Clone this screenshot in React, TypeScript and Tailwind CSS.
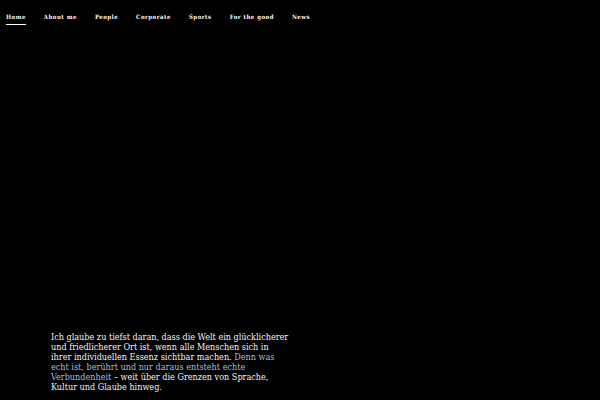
import React from 'react';

const NAV_ITEMS = [
  { label: 'Home', href: '#home' },
  { label: 'About me', href: '#about' },
  { label: 'People', href: '#people' },
  { label: 'Corporate', href: '#corporate' },
  { label: 'Sports', href: '#sports' },
  { label: 'For the good', href: '#good' },
  { label: 'News', href: '#news' },
];

const Header: React.FC = () => (
  <header className="px-[6px] pt-[12px]">
    <nav className="flex gap-[18px] text-[6px] leading-[9px] font-bold tracking-[0.5px]">
      {NAV_ITEMS.map((item, index) => (
        <a
          key={item.href}
          href={item.href}
          className={index === 0 ? 'border-b border-white pb-[3px]' : 'border-b border-transparent pb-[3px]'}
        >
          {item.label}
        </a>
      ))}
    </nav>
  </header>
);

const Statement: React.FC = () => (
  <section className="mt-auto px-[51px] pb-[8px]">
    <p className="max-w-[239px] text-[9px] leading-[10px] text-gray-100">
      Ich glaube zu tiefst daran, dass die Welt ein glücklicherer und friedlicherer Ort ist, wenn alle
      Menschen sich in ihrer individuellen Essenz sichtbar machen.{' '}
      <span className="text-[#a4bfd9]">
        Denn was echt ist, berührt und nur daraus entsteht echte Verbundenheit
      </span>{' '}
      – weit über die Grenzen von Sprache, Kultur und Glaube hinweg.
    </p>
  </section>
);

const App: React.FC = () => (
  <div className="flex min-h-screen flex-col bg-black font-['DejaVu_Serif_Condensed','DejaVu_Serif',serif] text-white">
    <Header />
    <Statement />
  </div>
);

export default App;
